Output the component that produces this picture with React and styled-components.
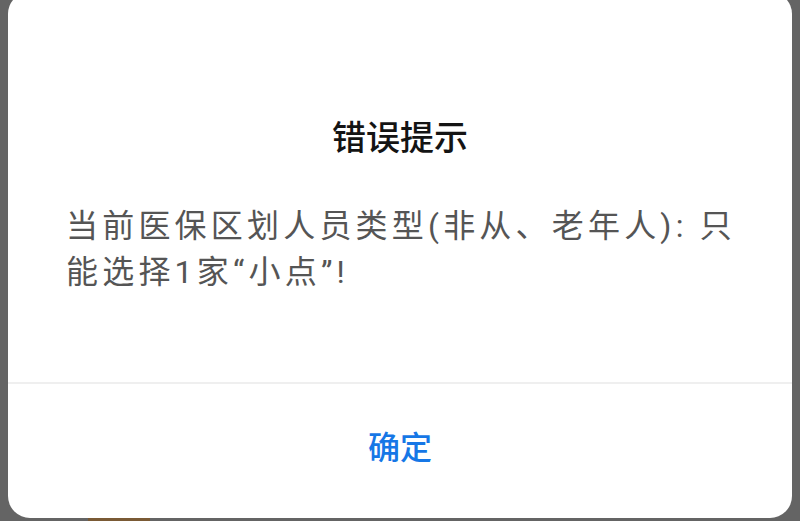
import styled, { createGlobalStyle } from "styled-components";

const GlobalStyle = createGlobalStyle`
  html, body {
    margin: 0;
    padding: 0;
    height: 100%;
    overflow: hidden;
    background: #646464;
  }
  body {
    font-family: Roboto, "Noto Sans CJK SC", sans-serif;
  }
`;

const Screen = styled.div`
  position: relative;
  width: 800px;
  height: 521px;
  overflow: hidden;
  background: #646464;
`;

const Dialog = styled.div`
  display: flex;
  flex-direction: column;
  width: 784px;
  height: 526px;
  margin: -8px 0 0 8px;
  background: #fff;
  border-radius: 22px;
`;

const Content = styled.div`
  flex: 1;
  display: flex;
  flex-direction: column;
  padding: 122px 58px 0;
`;

const Title = styled.h2`
  margin: 0;
  text-align: center;
  font-size: 34px;
  font-weight: 500;
  line-height: 48px;
  color: #141414;
`;

const Message = styled.p`
  margin: 41px -10px 0 0;
  font-size: 32px;
  line-height: 46px;
  letter-spacing: 4.2px;
  color: #555;
`;

const Footer = styled.div`
  height: 136px;
  box-sizing: border-box;
  padding-bottom: 12px;
  display: flex;
  align-items: center;
  justify-content: center;
  border-top: 2px solid #efefef;
`;

const ConfirmButton = styled.button`
  border: 0;
  background: none;
  padding: 0;
  font-family: inherit;
  font-size: 32px;
  font-weight: 500;
  color: #1677e6;
  cursor: pointer;
`;

const Peek = styled.div`
  position: absolute;
  left: 88px;
  bottom: 0;
  width: 62px;
  height: 3px;
  background: #7a5a35;
`;

export default function App() {
  return (
    <Screen>
      <GlobalStyle />
      <Dialog>
        <Content>
          <Title>错误提示</Title>
          <Message>当前医保区划人员类型(非从、老年人): 只能选择1家“小点”!</Message>
        </Content>
        <Footer>
          <ConfirmButton>确定</ConfirmButton>
        </Footer>
      </Dialog>
      <Peek />
    </Screen>
  );
}
